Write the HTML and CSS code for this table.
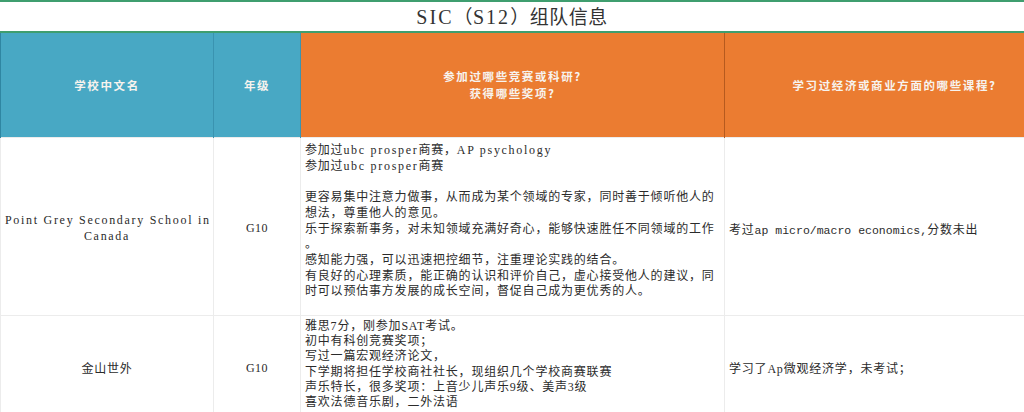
FILE: index.html
```html
<!DOCTYPE html>
<html lang="zh">
<head>
<meta charset="utf-8">
<title>SIC（S12）组队信息</title>
<link rel="stylesheet" href="styles.css">
</head>
<body>
<div class="sheet">
  <div class="title"><span class="lat">SIC</span>（<span class="lat">S12</span>）组队信息</div>
  <table class="grid">
    <colgroup>
      <col class="c1"><col class="c2"><col class="c3"><col class="c4">
    </colgroup>
    <thead>
      <tr class="head">
        <th class="blue first">学校中文名</th>
        <th class="blue">年级</th>
        <th class="orange">参加过哪些竞赛或科研?<br>获得哪些奖项?</th>
        <th class="orange">学习过经济或商业方面的哪些课程?</th>
      </tr>
    </thead>
    <tbody>
      <tr class="r1">
        <td class="center"><span class="wide">Point Grey Secondary School in<br>Canada</span></td>
        <td class="center"><span class="g">G10</span></td>
        <td class="top">参加过<span class="wide">ubc prosper</span>商赛，<span class="wide">AP psychology</span><br>参加过<span class="wide">ubc prosper</span>商赛<br><br>更容易集中注意力做事，从而成为某个领域的专家，同时善于倾听他人的<br>想法，尊重他人的意见。<br>乐于探索新事务，对未知领域充满好奇心，能够快速胜任不同领域的工作<br>。<br>感知能力强，可以迅速把控细节，注重理论实践的结合。<br>有良好的心理素质，能正确的认识和评价自己，虚心接受他人的建议，同<br>时可以预估事方发展的成长空间，督促自己成为更优秀的人。</td>
        <td class="mid">考过<span class="mono">ap micro/macro economics,</span>分数未出</td>
      </tr>
      <tr class="r2">
        <td class="center">金山世外</td>
        <td class="center"><span class="g">G10</span></td>
        <td class="top tight">雅思7分，刚参加SAT考试。<br>初中有科创竞赛奖项；<br>写过一篇宏观经济论文，<br>下学期将担任学校商社社长，现组织几个学校商赛联赛<br>声乐特长，很多奖项：上音少儿声乐9级、美声3级<br>喜欢法德音乐剧，二外法语</td>
        <td class="mid">学习了Ap微观经济学，未考试；</td>
      </tr>
    </tbody>
  </table>
</div>
</body>
</html>
```

FILE: styles.css
```css
html, body {
  margin: 0;
  padding: 0;
  background: #ffffff;
  overflow: hidden;
}

.sheet {
  width: 1064px;
  font-family: "Liberation Serif", "Noto Sans CJK SC", serif;
  color: #2b2b2b;
}

.title {
  border-top: 2px solid #3f9e6f;
  border-bottom: 2px solid #3f9e6f;
  height: 29px;
  line-height: 30px;
  width: 1024px;
  text-align: center;
  font-size: 19px;
  color: #333333;
  letter-spacing: 0.5px;
}

.title .lat {
  font-family: "Liberation Serif", serif;
  font-size: 20px;
  letter-spacing: 2px;
}

.grid {
  border-collapse: collapse;
  table-layout: fixed;
  width: 1064px;
}

.c1 { width: 213px; }
.c2 { width: 87px; }
.c3 { width: 424px; }
.c4 { width: 340px; }

.head th {
  height: 104px;
  padding: 0;
  color: #f7f3ee;
  font-weight: 600;
  font-size: 11.5px;
  letter-spacing: 1.6px;
  line-height: 17px;
  text-align: center;
  vertical-align: middle;
  font-family: "Noto Sans CJK SC", sans-serif;
}

.blue {
  background: #48a8c4;
  border-right: 1px solid #3a93b0;
}

.blue.first {
  border-left: 1px solid #2f86a2;
}

.orange {
  background: #eb7c31;
  border-right: 1px solid #b65a1e;
}

tbody td {
  padding: 0 4px;
  border: 1px solid #ececec;
  font-size: 12px;
  letter-spacing: 0.8px;
  white-space: nowrap;
  overflow: hidden;
}

.r1 td { height: 172px; }
.r2 td { height: 96px; }

.center {
  text-align: center;
  vertical-align: middle;
  padding-top: 4px;
}

.mid {
  text-align: left;
  vertical-align: middle;
  padding-top: 4px;
}

.top {
  vertical-align: top;
  padding-top: 5px;
  line-height: 15.7px;
}

.top.tight {
  line-height: 15.2px;
  padding-top: 3px;
}

.wide {
  font-family: "Liberation Serif", serif;
  letter-spacing: 1.7px;
  line-height: 15.5px;
}

.mono {
  font-family: "Liberation Mono", monospace;
  font-size: 11.5px;
  letter-spacing: 0;
}

.g {
  font-family: "Liberation Serif", serif;
  letter-spacing: 0.5px;
}
```
